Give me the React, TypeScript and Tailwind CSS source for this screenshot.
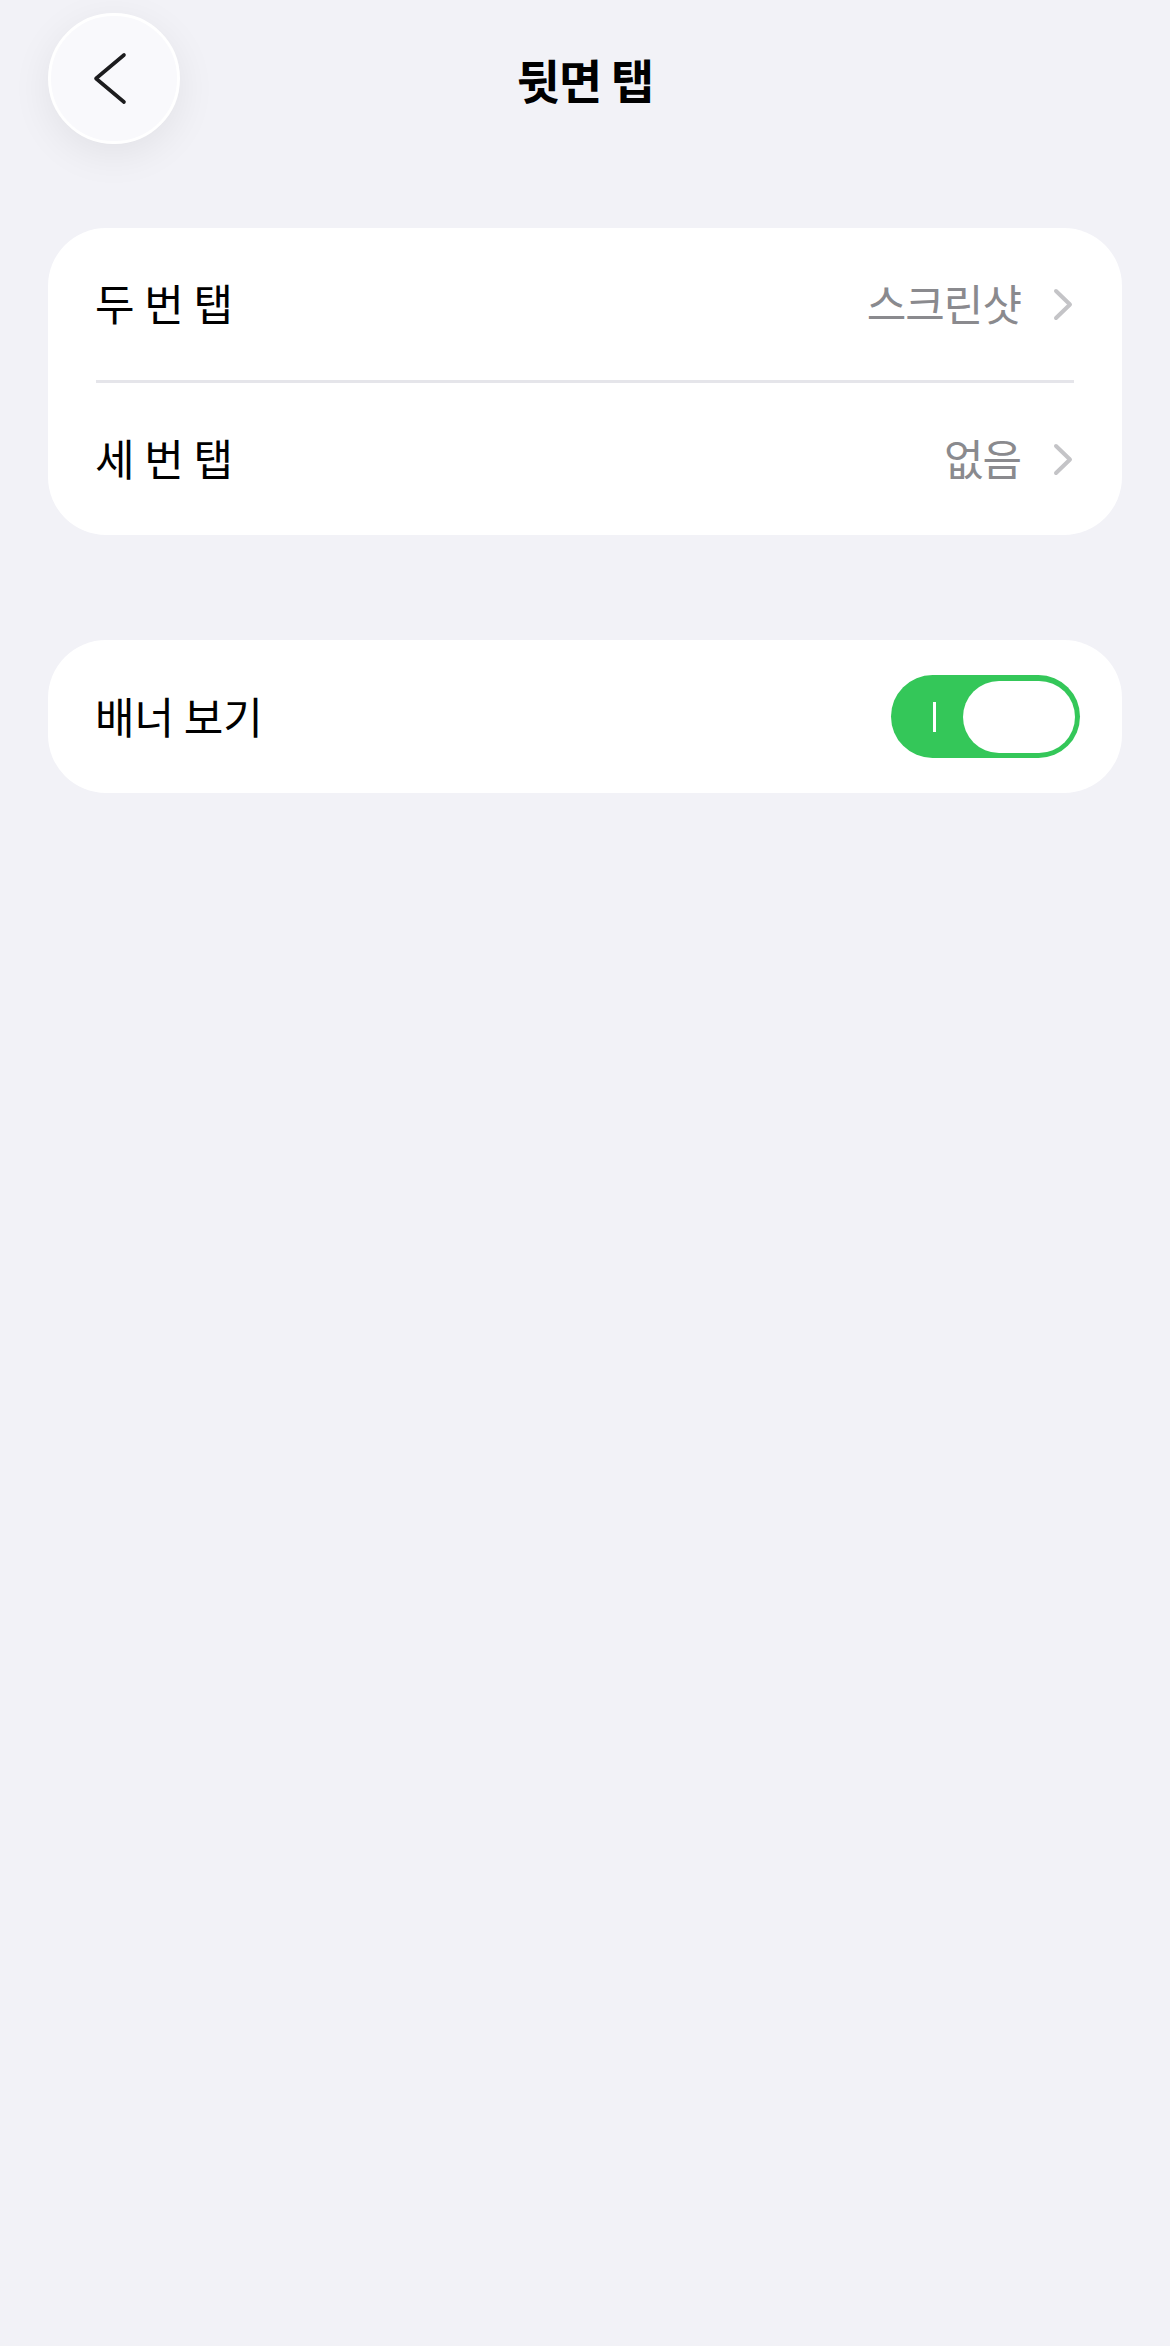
import React from "react";

function Chevron() {
  return (
    <svg width="22" height="33" viewBox="0 0 22 33" fill="none">
      <polyline points="4,3 18,16.5 4,30" stroke="#c4c4c7" strokeWidth="4" strokeLinecap="round" strokeLinejoin="round" />
    </svg>
  );
}

function Row({ label, value }: { label: string; value: string }) {
  return (
    <div className="flex h-[152px] items-center justify-between pl-[47px] pr-[48px]">
      <span className="mb-[3px] text-[43px] leading-none text-black">{label}</span>
      <div className="flex items-center gap-[31px]">
        <span className="mb-[3px] text-[43px] leading-none text-[#8a8a8e] tracking-[-1px]">{value}</span>
        <Chevron />
      </div>
    </div>
  );
}

export default function App() {
  return (
    <div className="min-h-[2346px] w-full bg-[#f2f2f7] px-12 font-['Noto_Sans_CJK_KR','Noto_Sans',sans-serif]">
      <div className="grid grid-cols-[132px_1fr_132px] items-center pt-[13px]">
        <button className="relative h-[131px] w-[132px] rounded-full border-[3px] border-white bg-[#f9f9fc] shadow-[0_10px_40px_rgba(0,0,0,0.07)]">
          <svg className="absolute left-[-3px] top-[-3px]" width="132" height="131" viewBox="0 0 132 131" fill="none">
            <polyline points="76,42 48,65.5 76,89" stroke="#1c1c1e" strokeWidth="3.6" strokeLinecap="round" strokeLinejoin="round" />
          </svg>
        </button>
        <h1 className="text-center text-[47px] font-bold leading-none text-black tracking-[-1px]">뒷면 탭</h1>
        <div />
      </div>

      <div className="mt-[84px] overflow-hidden rounded-[58px] bg-white">
        <Row label="두 번 탭" value="스크린샷" />
        <div className="mx-[48px] h-[3px] bg-[#e5e5ea]" />
        <Row label="세 번 탭" value="없음" />
      </div>

      <div className="mt-[105px] flex h-[153px] items-center justify-between rounded-[58px] bg-white pl-[47px] pr-[42px]">
        <span className="mb-[3px] text-[43px] leading-none text-black">배너 보기</span>
        <div className="flex h-[83px] w-[189px] items-center justify-between rounded-full bg-[#34c759] pl-[42px] pr-[5px]">
          <div className="h-[30px] w-[3px] bg-white" />
          <div className="h-[72px] w-[112px] rounded-full bg-white" />
        </div>
      </div>
    </div>
  );
}
